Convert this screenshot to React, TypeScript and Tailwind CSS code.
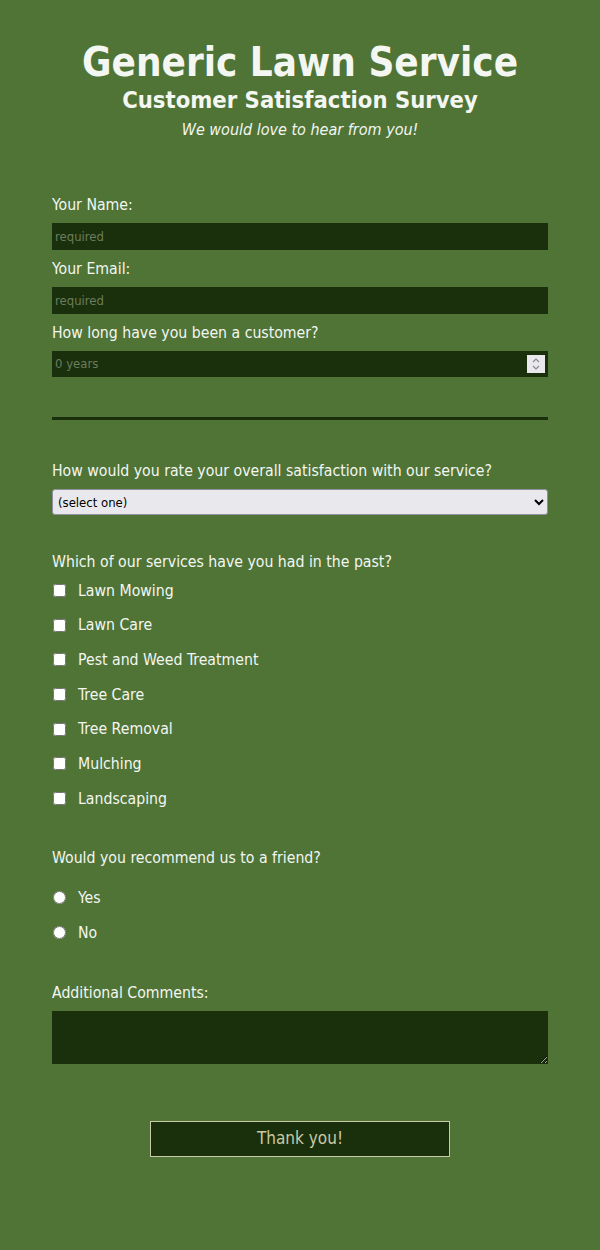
import React from "react";

const services = [
  "Lawn Mowing",
  "Lawn Care",
  "Pest and Weed Treatment",
  "Tree Care",
  "Tree Removal",
  "Mulching",
  "Landscaping",
];

const labelCls = "block text-[15.7px] leading-[22px] pt-[1px] -mb-[1px]";
const inputCls =
  "mt-[8px] block h-[27px] w-full bg-[#1a300c] px-[3px] text-[13px] text-[#cfd6c6] outline-none placeholder:text-[#6b7d5c]";

export default function App() {
  return (
    <div
      className="min-h-[1250px] w-full bg-[#4f7436] text-[#f4f6f2]"
      style={{ fontFamily: '"DejaVu Sans Condensed", "Liberation Sans", sans-serif' }}
    >
      <div className="mx-auto w-[496px] pt-[38px]">
        <header className="text-center">
          <h1 className="text-[40px] font-bold leading-[48px]">Generic Lawn Service</h1>
          <h2 className="text-[23.6px] font-bold leading-[28px]">Customer Satisfaction Survey</h2>
          <p className="mt-[5px] text-[16px] italic leading-[22px]">We would love to hear from you!</p>
        </header>

        <form className="mt-[52px]">
          <label className={labelCls}>Your Name:</label>
          <input className={inputCls} placeholder="required" />
          <label className={`mt-[7px] ${labelCls}`}>Your Email:</label>
          <input className={inputCls} placeholder="required" />
          <label className={`mt-[7px] ${labelCls}`}>How long have you been a customer?</label>
          <div className="relative mt-[8px] h-[26px] w-full bg-[#1a300c]">
            <span className="absolute left-[3px] top-[5px] text-[13px] leading-[16px] text-[#6b7d5c]">0 years</span>
            <div className="absolute right-[3px] top-[4px] flex h-[18px] w-[18px] flex-col items-center justify-center bg-[#e9e9ed]">
              <svg width="10" height="14" viewBox="0 0 10 14" fill="none" stroke="#8a8a8e" strokeWidth="1.2">
                <path d="M2 5 L5 2 L8 5" />
                <path d="M2 9 L5 12 L8 9" />
              </svg>
            </div>
          </div>

          <div className="mt-[40px] h-[3px] w-full bg-[#1a300c]" />

          <label className={`mt-[39px] ${labelCls}`}>
            How would you rate your overall satisfaction with our service?
          </label>
          <select className="mt-[8px] block h-[26px] w-full rounded-[3px] border border-[#8f8f9d] bg-[#e9e9ed] px-[1px] text-[13px] text-black">
            <option>(select one)</option>
          </select>

          <label className={`mt-[35px] ${labelCls}`}>Which of our services have you had in the past?</label>
          <div className="mt-[7px] flex flex-col gap-[12.67px]">
            {services.map((s) => (
              <label key={s} className="flex h-[22px] items-center pt-[1px] text-[15.7px]">
                <input type="checkbox" className="ml-[1px] mr-[12px] h-[13px] w-[13px]" />
                {s}
              </label>
            ))}
          </div>

          <label className={`mt-[37px] ${labelCls}`}>Would you recommend us to a friend?</label>
          <div className="mt-[18px] flex flex-col gap-[13px]">
            {["Yes", "No"].map((s) => (
              <label key={s} className="flex h-[22px] items-center pt-[1px] text-[15.7px]">
                <input type="radio" name="rec" className="ml-[1px] mr-[12px] h-[13px] w-[13px]" />
                {s}
              </label>
            ))}
          </div>

          <label className={`mt-[38px] ${labelCls}`}>Additional Comments:</label>
          <textarea className="mt-[8px] block h-[53px] w-full bg-[#1a300c] outline-none" />

          <div className="mt-[57px] flex justify-center">
            <button
              type="button"
              className="h-[36px] w-[300px] border border-[#c9c9a6] bg-[#1a300c] text-[17px] text-[#c9c9a6]"
            >
              Thank you!
            </button>
          </div>
        </form>
      </div>
    </div>
  );
}
